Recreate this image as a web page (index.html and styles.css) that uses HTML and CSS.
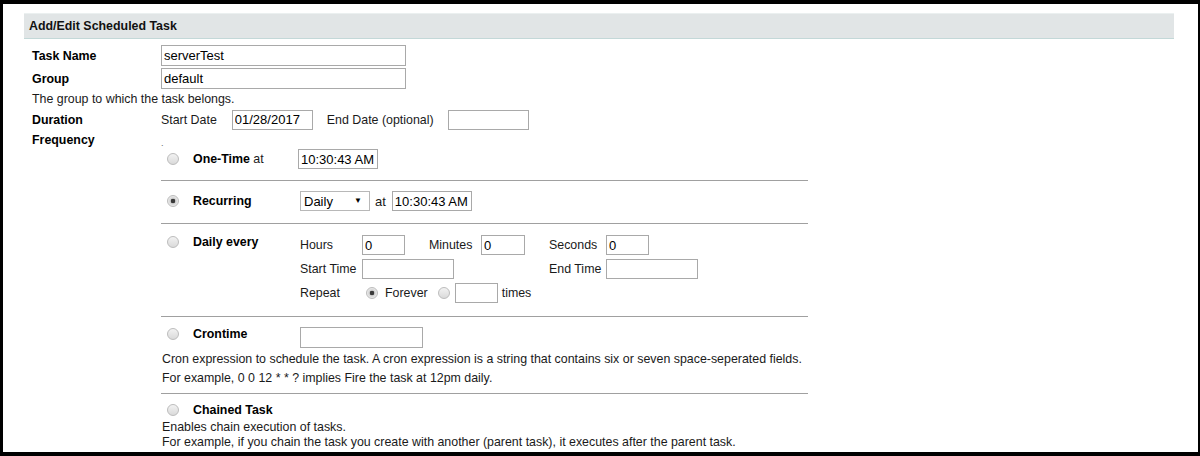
FILE: index.html
```html
<!DOCTYPE html>
<html><head>
<meta charset="utf-8"><title>Add/Edit Scheduled Task</title>
<link rel="stylesheet" href="styles.css">
</head>
<body>
<div class="frame">
<div class="panel">
<div class="panel-title">Add/Edit Scheduled Task</div>
<div class="form">
<div class="row"><span class="lbl">Task Name</span><input class="txt wide" type="text" value="serverTest"></div>
<div class="row"><span class="lbl">Group</span><input class="txt wide" type="text" value="default"></div>
<div class="note">The group to which the task belongs.</div>
<div class="row">
<span class="lbl">Duration</span>
<span class="cap">Start Date</span><input class="txt date" type="text" value="01/28/2017">
<span class="cap end">End Date (optional)</span><input class="txt date" type="text">
</div>
<div class="row short"><span class="lbl">Frequency</span><span class="dot">.</span></div>

<div class="freq">
<div class="opt first">
<div class="opt-head">
<span class="rcol"><input class="radio" type="radio" name="freq"></span>
<span class="oname"><b>One-Time</b> at</span>
<input class="txt time" type="text" value="10:30:43 AM">
</div>
</div>

<div class="opt">
<div class="opt-head">
<span class="rcol"><input class="radio" type="radio" name="freq" checked></span>
<span class="oname"><b>Recurring</b></span>
<span class="sel"><select><option>Daily</option><option>Weekly</option><option>Monthly</option></select></span>
<span class="at">at</span>
<input class="txt time" type="text" value="10:30:43 AM">
</div>
</div>

<div class="opt daily">
<div class="opt-head top">
<span class="rcol"><input class="radio" type="radio" name="freq"></span>
<span class="oname"><b>Daily every</b></span>
<div class="dgrid">
<span>Hours</span><input class="txt small" type="text" value="0"><span></span>
<span>Minutes</span><input class="txt small m" type="text" value="0"><span></span>
<span>Seconds</span><input class="txt small" type="text" value="0">
<span>Start Time</span><input class="txt mid span3" type="text">
<span class="c7">End Time</span><input class="txt mid" type="text">
<span>Repeat</span>
<span class="repeat">
<input class="radio" type="radio" name="rep" checked><span class="rl">Forever</span>
<input class="radio" type="radio" name="rep"><input class="txt small" type="text"><span class="tl">times</span>
</span>
</div>
</div>
</div>

<div class="opt cron">
<div class="opt-head top">
<span class="rcol"><input class="radio" type="radio" name="freq"></span>
<span class="oname"><b>Crontime</b></span>
<input class="txt crontxt" type="text">
</div>
<div class="desc">Cron expression to schedule the task. A cron expression is a string that contains six or seven space-seperated fields.<br>
For example, 0 0 12 * * ? implies Fire the task at 12pm daily.</div>
</div>

<div class="opt chain">
<div class="opt-head">
<span class="rcol"><input class="radio" type="radio" name="freq"></span>
<span class="oname"><b>Chained Task</b></span>
</div>
<div class="desc">Enables chain execution of tasks.<br>
For example, if you chain the task you create with another (parent task), it executes after the parent task.</div>
</div>
</div>

</div>
</div>
</div>
</body></html>
```

FILE: styles.css
```css
body {
margin: 0;
font-family: "Liberation Sans", Arial, sans-serif;
font-size: 12.4px;
color: #1a1a1a;
background-color: #fff;
}
.frame {
width: 1200px;
height: 456px;
box-sizing: border-box;
border-style: solid;
border-color: #000;
border-width: 4px 2px 4px 3px;
overflow: hidden;
}
.panel {
margin: 9px 24px 0 21px;
}
.panel-title {
height: 24px;
line-height: 24px;
padding-left: 5px;
font-weight: bold;
color: #111;
background-color: #e1e5e6;
border-top: 1px solid #ebf0f0;
border-bottom: 1px solid #c3d8d8;
}
.form {
padding: 5px 0 0 8px;
}
.row {
display: flex;
align-items: center;
height: 23px;
}
.row.short {
height: 18px;
}
.lbl {
width: 129px;
flex: none;
font-weight: bold;
color: #000;
}
.note {
height: 18px;
line-height: 18px;
}
.dot {
position: relative;
top: 3px;
font-size: 9px;
color: #666;
}
.txt {
box-sizing: border-box;
height: 20px;
margin: 0;
padding: 0 2px;
border: 1px solid #a9a9a9;
font-family: "Liberation Sans", Arial, sans-serif;
font-size: 13px;
color: #000;
background-color: #fff;
}
.txt.wide {
width: 245px;
height: 21px;
}
.cap {
margin-right: 15px;
}
.cap.end {
margin: 0 14px 0 14px;
}
.txt.date {
width: 81px;
}
.freq {
margin-left: 129px;
width: 647px;
}
.opt {
padding: 10px 0 12px;
border-top: 1px solid #a0a0a0;
}
.opt.first {
padding: 0 0 11px;
border-top: none;
}
.opt.daily {
padding: 11px 0 13px;
}
.opt.cron {
padding: 10px 0 5px;
}
.opt.chain {
padding: 8px 0 0;
}
.opt-head {
display: flex;
align-items: center;
}
.opt-head.top {
align-items: flex-start;
}
.opt-head.top .rcol,
.opt-head.top .oname {
height: 14px;
line-height: 14px;
}
.rcol {
width: 32px;
flex: none;
display: flex;
align-items: center;
padding-left: 6px;
box-sizing: border-box;
}
.oname {
width: 105px;
flex: none;
}
.oname b {
color: #000;
}
.radio {
appearance: none;
-webkit-appearance: none;
width: 12px;
height: 12px;
margin: 0;
border: 1px solid #bcbcbc;
border-radius: 50%;
background: linear-gradient(#f2f2f2, #dadada);
flex: none;
}
.radio:checked {
background: radial-gradient(circle, #3a3a3a 0 2px, #cfcfcf 2.6px, #ececec 5px);
}
.txt.time {
width: 80px;
}
.sel {
position: relative;
margin-left: 2px;
}
.sel select {
appearance: none;
-webkit-appearance: none;
box-sizing: border-box;
width: 70px;
height: 20px;
margin: 0;
padding: 0 0 0 3px;
border: 1px solid #b8b8b8;
border-radius: 0;
background-color: #fff;
font-family: "Liberation Sans", Arial, sans-serif;
font-size: 13px;
color: #000;
}
.sel::after {
content: "\25BC";
position: absolute;
right: 8px;
top: 5px;
font-size: 8px;
color: #000;
pointer-events: none;
}
.at {
margin: 0 6px 0 5px;
font-size: 13px;
}
.dgrid {
margin-left: 2px;
display: grid;
grid-template-columns: 62px 43px 24px 52px 44px 24px 57px 92px;
grid-auto-rows: 20px;
row-gap: 4px;
align-items: center;
}
.dgrid .txt.small {
width: 43px;
}
.dgrid .txt.m {
width: 44px;
}
.txt.mid {
width: 92px;
}
.span3 {
grid-column: 2 / 7;
}
.c7 {
grid-column: 7;
}
.repeat {
grid-column: 2 / 9;
display: flex;
align-items: center;
}
.repeat .radio {
margin-left: 4px;
}
.rl {
margin: 0 6px 0 7px;
}
.repeat .txt.small {
width: 43px;
margin-left: 5px;
}
.tl {
margin-left: 4px;
}
.txt.crontxt {
width: 123px;
height: 21px;
margin-left: 2px;
}
.desc {
padding-left: 1px;
line-height: 19px;
}
.cron .desc {
margin-top: 2px;
}
.chain .oname {
line-height: 16px;
}
.chain .desc {
margin-top: 2px;
line-height: 15px;
}
```
